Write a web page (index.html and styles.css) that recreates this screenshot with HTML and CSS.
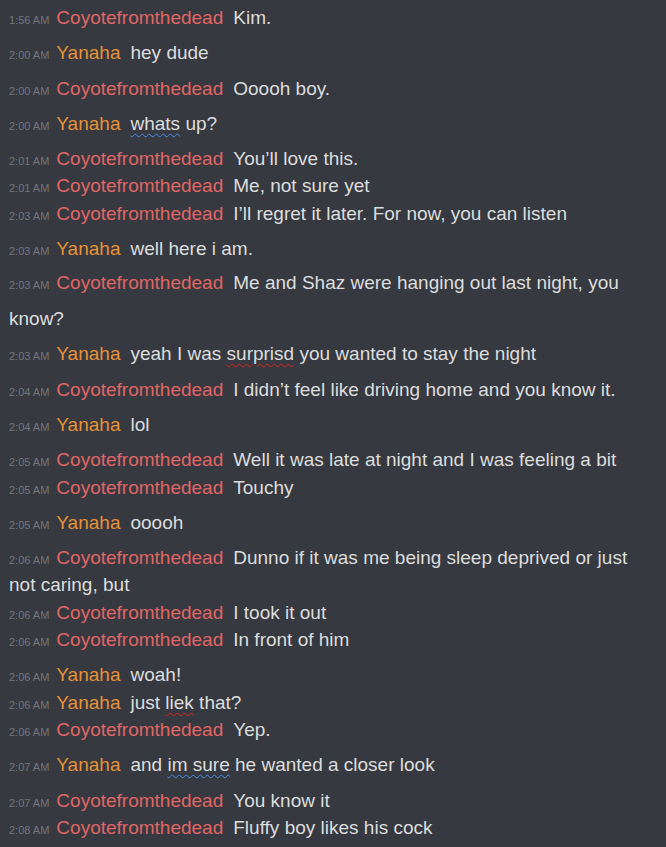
FILE: index.html
```html
<!DOCTYPE html>
<html lang="en">

<head>
    <meta charset="UTF-8">
    <meta name="viewport" content="width=device-width, initial-scale=1.0">
    <title>chat log</title>
    <link rel="stylesheet" href="styles.css">
</head>

<body>
    <div id="chat">
        <div class="group">
            <div class="msg"><span class="time">1:56 AM</span><span class="name coyote">Coyotefromthedead</span><span class="text">Kim.</span></div>
        </div>
        <div class="group">
            <div class="msg"><span class="time">2:00 AM</span><span class="name yanaha">Yanaha</span><span class="text">hey dude</span></div>
        </div>
        <div class="group">
            <div class="msg"><span class="time">2:00 AM</span><span class="name coyote">Coyotefromthedead</span><span class="text">Ooooh boy.</span></div>
        </div>
        <div class="group">
            <div class="msg"><span class="time">2:00 AM</span><span class="name yanaha">Yanaha</span><span class="text"><span class="spell-blue">whats</span> up?</span></div>
        </div>
        <div class="group">
            <div class="msg"><span class="time">2:01 AM</span><span class="name coyote">Coyotefromthedead</span><span class="text">You’ll love this.</span></div>
            <div class="msg"><span class="time">2:01 AM</span><span class="name coyote">Coyotefromthedead</span><span class="text">Me, not sure yet</span></div>
            <div class="msg"><span class="time">2:03 AM</span><span class="name coyote">Coyotefromthedead</span><span class="text">I’ll regret it later. For now, you can listen</span></div>
        </div>
        <div class="group">
            <div class="msg"><span class="time">2:03 AM</span><span class="name yanaha">Yanaha</span><span class="text">well here i am.</span></div>
        </div>
        <div class="group tall">
            <div class="msg"><span class="time">2:03 AM</span><span class="name coyote">Coyotefromthedead</span><span class="text">Me and Shaz were hanging out last night, you know?</span></div>
        </div>
        <div class="group after-tall">
            <div class="msg"><span class="time">2:03 AM</span><span class="name yanaha">Yanaha</span><span class="text">yeah I was <span class="spell-red">surprisd</span> you wanted to stay the night</span></div>
        </div>
        <div class="group">
            <div class="msg"><span class="time">2:04 AM</span><span class="name coyote">Coyotefromthedead</span><span class="text">I didn’t feel like driving home and you know it.</span></div>
        </div>
        <div class="group">
            <div class="msg"><span class="time">2:04 AM</span><span class="name yanaha">Yanaha</span><span class="text">lol</span></div>
        </div>
        <div class="group">
            <div class="msg"><span class="time">2:05 AM</span><span class="name coyote">Coyotefromthedead</span><span class="text">Well it was late at night and I was feeling a bit</span></div>
            <div class="msg"><span class="time">2:05 AM</span><span class="name coyote">Coyotefromthedead</span><span class="text">Touchy</span></div>
        </div>
        <div class="group">
            <div class="msg"><span class="time">2:05 AM</span><span class="name yanaha">Yanaha</span><span class="text">ooooh</span></div>
        </div>
        <div class="group">
            <div class="msg"><span class="time">2:06 AM</span><span class="name coyote">Coyotefromthedead</span><span class="text">Dunno if it was me being sleep deprived or just not caring, but</span></div>
            <div class="msg"><span class="time">2:06 AM</span><span class="name coyote">Coyotefromthedead</span><span class="text">I took it out</span></div>
            <div class="msg"><span class="time">2:06 AM</span><span class="name coyote">Coyotefromthedead</span><span class="text">In front of him</span></div>
        </div>
        <div class="group">
            <div class="msg"><span class="time">2:06 AM</span><span class="name yanaha">Yanaha</span><span class="text">woah!</span></div>
            <div class="msg"><span class="time">2:06 AM</span><span class="name yanaha">Yanaha</span><span class="text">just <span class="spell-red">liek</span> that?</span></div>
            <div class="msg"><span class="time">2:06 AM</span><span class="name coyote">Coyotefromthedead</span><span class="text">Yep.</span></div>
        </div>
        <div class="group">
            <div class="msg"><span class="time">2:07 AM</span><span class="name yanaha">Yanaha</span><span class="text">and <span class="spell-blue">im sure</span> he wanted a closer look</span></div>
        </div>
        <div class="group">
            <div class="msg"><span class="time">2:07 AM</span><span class="name coyote">Coyotefromthedead</span><span class="text">You know it</span></div>
            <div class="msg"><span class="time">2:08 AM</span><span class="name coyote">Coyotefromthedead</span><span class="text">Fluffy boy likes his cock</span></div>
        </div>
    </div>
</body>

</html>
```

FILE: styles.css
```css
html,
body {
    margin: 0;
    background-color: #36393f;
}

#chat {
    padding: 4px 9px 0 9px;
    width: 648px;
    font-family: "Liberation Sans", Arial, sans-serif;
    font-size: 19px;
    color: #dcddde;
}

.group {
    margin-top: 8px;
}

.group:first-child {
    margin-top: 0;
}

.msg {
    line-height: 27.3px;
}

.time {
    font-size: 11px;
    line-height: 11px;
    color: #72767d;
    margin-right: 7px;
}

.name {
    margin-right: 10px;
}

.coyote {
    color: #e06666;
}

.yanaha {
    color: #e69138;
}

/* wrapped line in this one sat lower */
.tall {
    margin-top: 3px;
}

.tall .msg {
    line-height: 36px;
}

.after-tall {
    margin-top: 3px;
}

.spell-red {
    text-decoration: underline wavy #e02020;
    text-decoration-thickness: 1px;
    text-underline-offset: 3px;
}

.spell-blue {
    text-decoration: underline wavy #4a8ef0;
    text-decoration-thickness: 1px;
    text-underline-offset: 3px;
}
```
